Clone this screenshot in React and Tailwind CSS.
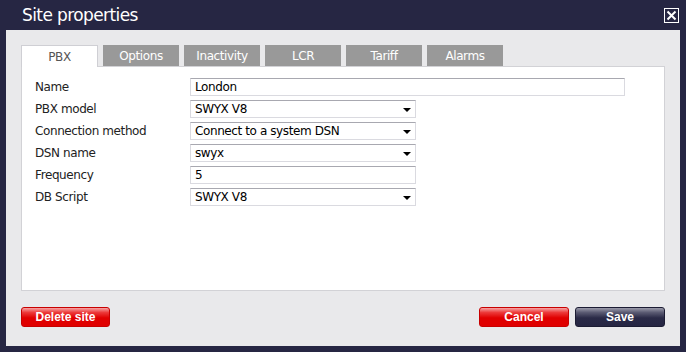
import React from 'react';

const tabs = ['PBX', 'Options', 'Inactivity', 'LCR', 'Tariff', 'Alarms'];

const rows = [
  { label: 'Name', value: 'London', wide: true },
  { label: 'PBX model', value: 'SWYX V8', select: true },
  { label: 'Connection method', value: 'Connect to a system DSN', select: true },
  { label: 'DSN name', value: 'swyx', select: true },
  { label: 'Frequency', value: '5' },
  { label: 'DB Script', value: 'SWYX V8', select: true },
];

function Field({ value, wide, select }) {
  return (
    <div
      className={`relative h-[18px] ${wide ? 'w-[435px]' : 'w-[226px]'} bg-white border border-[#dadae0] border-t-[#a8a8b0] flex items-center pl-[4px] text-[12px] tracking-[-0.4px] text-black`}
    >
      {value}
      {select && (
        <svg className="absolute right-[4px] top-[7px]" width="8" height="4" viewBox="0 0 8 4">
          <polygon points="0,0 8,0 4,4" fill="#000" />
        </svg>
      )}
    </div>
  );
}

function Button({ children, dark, w }) {
  return (
    <button
      className={`${w} h-[20px] rounded-[3px] text-white text-[12px] font-bold font-['Liberation_Sans',sans-serif] border ${
        dark
          ? 'border-[#1c1c33] bg-[linear-gradient(to_bottom,#9a9aaa_0%,#5a5a72_25%,#2a2a47_55%,#262643_100%)]'
          : 'border-[#c80000] bg-[linear-gradient(to_bottom,#f7a4a4_0%,#ec3a3a_25%,#e00000_55%,#e00000_100%)]'
      }`}
    >
      {children}
    </button>
  );
}

export default function App() {
  return (
    <div className="w-[686px] h-[352px] bg-[#262643] flex flex-col px-[6px] pb-[6px] font-['DejaVu_Sans',sans-serif]">
      {/* title bar */}
      <div className="h-[30px] flex items-center justify-between pl-[16px] pr-[1px]">
        <span className="text-white text-[17px] tracking-[-0.6px] leading-none mt-[1px]">Site properties</span>
        <div className="w-[15px] h-[15px] border border-white flex items-center justify-center">
          <svg width="11" height="11" viewBox="0 0 11 11">
            <path d="M1.5 1.5 L9.5 9.5 M9.5 1.5 L1.5 9.5" stroke="#fff" strokeWidth="2" />
          </svg>
        </div>
      </div>

      <div className="flex-1 bg-[#e9e9eb] px-[15px] pt-[15px] flex flex-col">
        {/* tabs */}
        <div className="h-[22px] -mb-px flex gap-[5px] relative z-10">
          {tabs.map((t, i) =>
            i === 0 ? (
              <div
                key={t}
                className="w-[77px] h-[22px] bg-white border border-[#cfcfd4] border-b-0 flex items-center justify-center text-[12px] tracking-[-0.4px] text-[#555]"
              >
                {t}
              </div>
            ) : (
              <div
                key={t}
                className="w-[76px] h-[21px] bg-[#999999] flex items-center justify-center text-[12px] tracking-[-0.4px] text-white"
              >
                {t}
              </div>
            )
          )}
        </div>

        {/* panel */}
        <div className="h-[225px] bg-white border border-[#d2d2d6] pl-[13px] pt-[11px] flex flex-col gap-[4px]">
          {rows.map((r) => (
            <div key={r.label} className="flex items-center">
              <div className="w-[155px] text-[12px] tracking-[-0.4px] text-[#222]">{r.label}</div>
              <Field value={r.value} wide={r.wide} select={r.select} />
            </div>
          ))}
        </div>

        {/* footer */}
        <div className="mt-[16px] flex justify-between">
          <Button w="w-[89px]">Delete site</Button>
          <div className="flex gap-[6px]">
            <Button w="w-[90px]">Cancel</Button>
            <Button w="w-[90px]" dark>
              Save
            </Button>
          </div>
        </div>
      </div>
    </div>
  );
}
